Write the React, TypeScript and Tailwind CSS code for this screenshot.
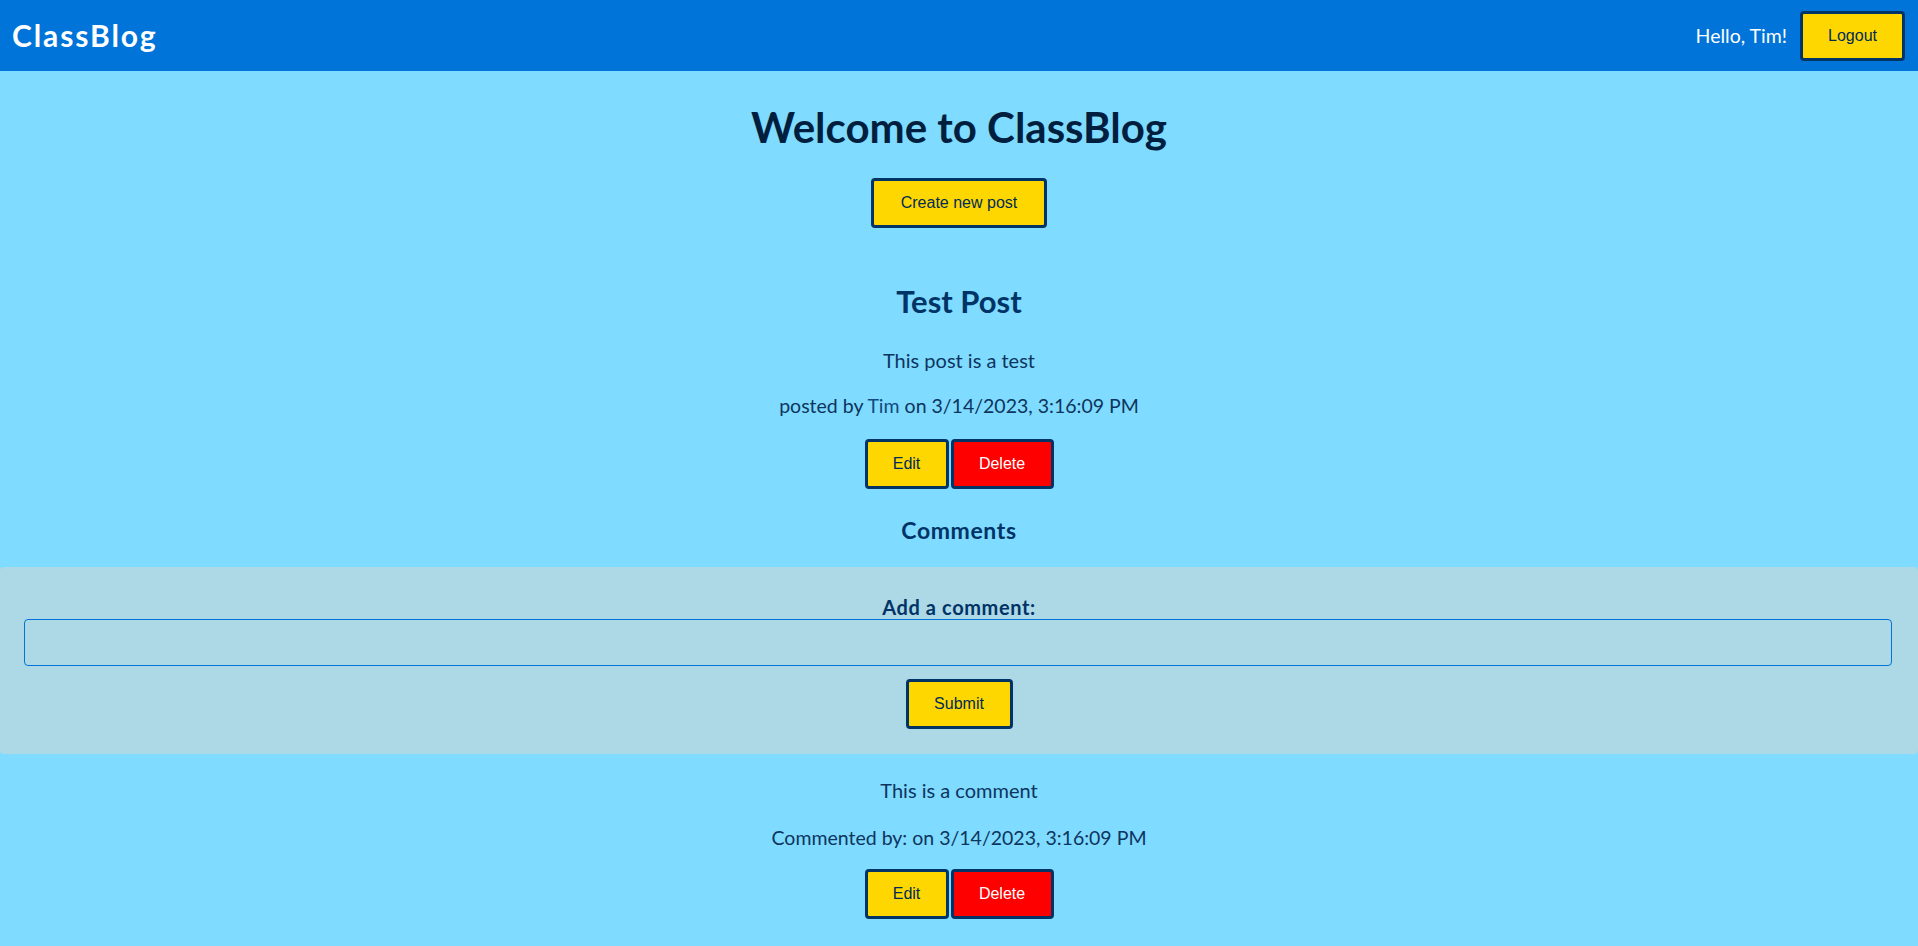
import React from "react";

const font = { fontFamily: "Lato, 'Noto Sans', sans-serif" };

function YellowButton({ children, className = "" }: { children: React.ReactNode; className?: string }) {
  return (
    <button
      className={`h-[50px] rounded-[4px] border-[3px] border-[#003366] bg-[#ffd700] text-[16px] text-[#002b55] font-['Liberation_Sans',Arial,sans-serif] ${className}`}
    >
      {children}
    </button>
  );
}

function PostActions() {
  return (
    <div className="flex justify-center gap-[2px]">
      <YellowButton className="w-[84px]">Edit</YellowButton>
      <button className="h-[50px] w-[103px] rounded-[4px] border-[3px] border-[#003366] bg-[#ff0000] text-[16px] text-white font-['Liberation_Sans',Arial,sans-serif]">
        Delete
      </button>
    </div>
  );
}

export default function App() {
  return (
    <div className="min-h-[946px] bg-[#7fdbff] text-[#0d355e]" style={font}>
      <header className="flex h-[71px] items-center justify-between bg-[#0074d9] pl-[12px] pr-[13px]">
        <span className="text-[30px] font-bold tracking-[1.9px] text-white">ClassBlog</span>
        <div className="flex items-center gap-[13px]">
          <span className="text-[19.5px] text-white">Hello, Tim!</span>
          <YellowButton className="w-[105px]">Logout</YellowButton>
        </div>
      </header>

      <main className="flex flex-col items-center text-center">
        <h1 className="mt-[32px] text-[42px] font-bold leading-[48px] text-[#001f3f]">Welcome to ClassBlog</h1>
        <YellowButton className="mt-[27px] w-[176px]">Create new post</YellowButton>

        <h2 className="mt-[55px] text-[31px] font-bold leading-[36px] text-[#003366]">Test Post</h2>
        <p className="mt-[27px] text-[20px] leading-[28px]">This post is a test</p>
        <p className="mt-[18px] text-[19.5px] leading-[28px]">
          posted by <span className="text-[#104a7f]">Tim</span> on 3/14/2023, 3:16:09 PM
        </p>
        <div className="mt-[19px]">
          <PostActions />
        </div>

        <h3 className="mt-[27px] text-[23px] font-bold leading-[28px] tracking-[0.6px] text-[#003366]">Comments</h3>
      </main>

      <section className="mt-[23px] flex flex-col items-center rounded-[4px] bg-[#add8e6] pb-[25px] pt-[28px]">
        <label className="text-[20px] font-bold leading-[24px] tracking-[0.6px] text-[#003366]">Add a comment:</label>
        <input
          type="text"
          className="ml-[24px] mr-[26px] h-[47px] w-[1868px] rounded-[4px] border border-[#0074d9] bg-transparent outline-none"
        />
        <YellowButton className="mt-[13px] w-[107px]">Submit</YellowButton>
      </section>

      <div className="flex flex-col items-center pb-[30px] text-center">
        <p className="mt-[22px] text-[20px] leading-[28px]">This is a comment</p>
        <p className="mt-[20px] text-[19.5px] leading-[28px]">Commented by: on 3/14/2023, 3:16:09 PM</p>
        <div className="mt-[17px]">
          <PostActions />
        </div>
      </div>
    </div>
  );
}
